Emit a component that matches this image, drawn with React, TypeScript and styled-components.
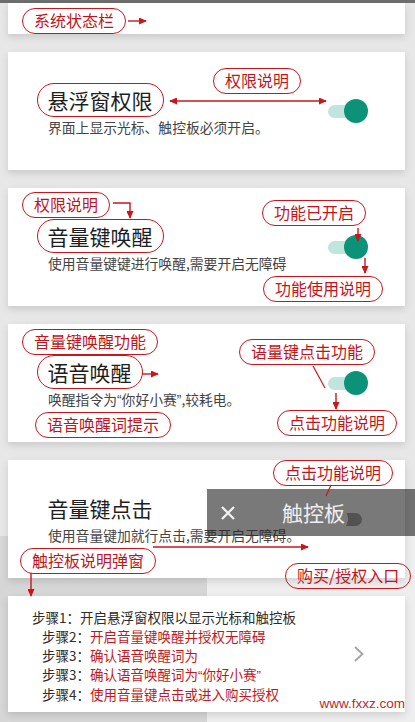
import React from 'react';
import styled, { createGlobalStyle } from 'styled-components';

const RED = '#c8161d';

const GlobalStyle = createGlobalStyle`
  html, body {
    margin: 0;
    padding: 0;
    background: #e7e7e7;
  }
  body {
    font-family: "Noto Sans CJK SC", "Noto Sans", sans-serif;
    color: #222;
  }
`;

const Page = styled.div`
  position: relative;
  width: 415px;
  height: 722px;
  overflow: hidden;
  background:
    linear-gradient(to right, #d6d6d6 0 207px, #eeeeee 207px 100%) 0 536px / 100% 186px no-repeat,
    #e7e7e7;
`;

const TopStrip = styled.div`
  height: 3px;
  background: #6e6e6e;
`;

const Cards = styled.div`
  display: flex;
  flex-direction: column;
  gap: 18px;
  padding: 0 10px 0 8px;
`;

const Card = styled.div<{ $h: number }>`
  height: ${({ $h }) => $h}px;
  background: #fff;
  box-shadow: 0 3px 7px rgba(0, 0, 0, 0.13);
  display: flex;
  align-items: center;
  box-sizing: border-box;
`;

const Info = styled.div`
  flex: 1;
  align-self: stretch;
  display: flex;
  flex-direction: column;
  align-items: flex-start;
  padding: 31px 0 0 40px;
`;

const Title = styled.div<{ $marked?: boolean }>`
  font-size: 21px;
  line-height: 28px;
  padding: 2px 10px;
  margin-left: -11.5px;
  border: 1.5px solid ${({ $marked }) => ($marked ? RED : 'transparent')};
  border-radius: 20px;
  color: #1e1e1e;
`;

const Desc = styled.div`
  font-size: 13.8px;
  line-height: 20px;
  color: #444;
  white-space: nowrap;
`;

const Quote = styled.span`
  font-family: "Liberation Sans", Arial, sans-serif;
`;

const Toggle = styled.div<{ $on?: boolean }>`
  position: relative;
  width: 40px;
  height: 24px;
  margin-right: 37px;
  flex-shrink: 0;

  &::before {
    content: '';
    position: absolute;
    left: 0;
    top: 5.5px;
    width: 34px;
    height: 13px;
    border-radius: 7px;
    background: ${({ $on }) => ($on ? '#bfe5dd' : '#9a9a9a')};
  }

  &::after {
    content: '';
    position: absolute;
    top: 0;
    ${({ $on }) => ($on ? 'right: 0;' : 'left: -4px;')}
    width: 24px;
    height: 24px;
    border-radius: 50%;
    background: ${({ $on }) => ($on ? '#0c9279' : '#ffffff')};
  }
`;

const Steps = styled.div`
  flex: 1;
  align-self: stretch;
  padding: 12px 0 0 24px;
  font-size: 13.5px;
  line-height: 19px;
  color: #2c2c2c;
`;

const Step = styled.div<{ $indent?: boolean }>`
  padding-left: ${({ $indent }) => ($indent ? 10 : 0)}px;
  white-space: nowrap;
`;

const Hint = styled.span`
  color: #c0181e;
`;

const Chevron = styled.svg`
  margin-right: 40px;
  flex-shrink: 0;
`;

const Watermark = styled.div`
  position: absolute;
  right: 10px;
  top: 696px;
  font-family: "Liberation Sans", Arial, sans-serif;
  font-size: 13.5px;
  line-height: 16px;
  color: #c0282d;
`;

const Toast = styled.div`
  position: absolute;
  left: 207px;
  top: 489px;
  width: 208px;
  height: 47px;
  background: rgba(38, 38, 38, 0.62);
  display: flex;
  align-items: center;
  padding-left: 13px;
  box-sizing: border-box;
  color: #efefef;
`;

const ToastTitle = styled.span`
  font-size: 21px;
  line-height: 28px;
  margin-left: 46px;
  margin-top: -2px;
`;

const Note = styled.div<{ $x: number; $y: number }>`
  position: absolute;
  left: ${({ $x }) => $x}px;
  top: ${({ $y }) => $y}px;
  height: 26px;
  box-sizing: border-box;
  padding: 0 11px;
  border: 1.5px solid ${RED};
  border-radius: 14px;
  font-size: 16px;
  line-height: 23px;
  color: #c0151c;
  white-space: nowrap;
`;

const Marks = styled.svg`
  position: absolute;
  left: 0;
  top: 0;
  pointer-events: none;
`;

const notes = [
  { x: 22, y: 8, text: '系统状态栏' },
  { x: 213, y: 68, text: '权限说明' },
  { x: 22, y: 192, text: '权限说明' },
  { x: 262, y: 200, text: '功能已开启' },
  { x: 263, y: 276, text: '功能使用说明' },
  { x: 22, y: 329, text: '音量键唤醒功能' },
  { x: 35, y: 412, text: '语音唤醒词提示' },
  { x: 239, y: 339, text: '语量键点击功能' },
  { x: 277, y: 410, text: '点击功能说明' },
  { x: 273, y: 460, text: '点击功能说明' },
  { x: 20, y: 548, text: '触控板说明弹窗' },
  { x: 285, y: 563, text: '购买/授权入口' },
];

const arrows = [
  'M128 21 H146',
  'M113 203 H130 V218',
  'M358 228 V241',
  'M365 258 V273',
  'M142 374 H158',
  'M336 393 V409',
  'M153 547 H308',
  'M31 573 V596',
];

const App: React.FC = () => {
  return (
    <Page>
      <GlobalStyle />
      <TopStrip />
      <Cards>
        <Card $h={31} />
        <Card $h={118}>
          <Info>
            <Title $marked>悬浮窗权限</Title>
            <Desc>界面上显示光标、触控板必须开启。</Desc>
          </Info>
          <Toggle $on />
        </Card>
        <Card $h={118}>
          <Info>
            <Title $marked>音量键唤醒</Title>
            <Desc>使用音量键键进行唤醒,需要开启无障碍</Desc>
          </Info>
          <Toggle $on />
        </Card>
        <Card $h={118}>
          <Info>
            <Title $marked>语音唤醒</Title>
            <Desc>
              唤醒指令为<Quote>“</Quote>你好小赛<Quote>”</Quote>,较耗电。
            </Desc>
          </Info>
          <Toggle $on />
        </Card>
        <Card $h={118}>
          <Info>
            <Title>音量键点击</Title>
            <Desc>使用音量键加就行点击,需要开启无障碍。</Desc>
          </Info>
          <Toggle />
        </Card>
        <Card $h={116}>
          <Steps>
            <Step>步骤1：开启悬浮窗权限以显示光标和触控板</Step>
            <Step $indent>
              步骤2：<Hint>开启音量键唤醒并授权无障碍</Hint>
            </Step>
            <Step $indent>
              步骤3：<Hint>确认语音唤醒词为</Hint>
            </Step>
            <Step $indent>
              步骤3：
              <Hint>
                确认语音唤醒词为<Quote>“</Quote>你好小赛<Quote>”</Quote>
              </Hint>
            </Step>
            <Step $indent>
              步骤4：<Hint>使用音量键点击或进入购买授权</Hint>
            </Step>
          </Steps>
          <Chevron width="12" height="18" viewBox="0 0 12 18">
            <path d="M2 2 L9.5 9 L2 16" fill="none" stroke="#a3a3a3" strokeWidth="1.8" />
          </Chevron>
        </Card>
      </Cards>

      <Watermark>www.fxxz.com</Watermark>

      <Toast>
        <svg width="16" height="16" viewBox="0 0 16 16">
          <path d="M2 2 L14 14 M14 2 L2 14" stroke="#f2f2f2" strokeWidth="2.2" />
        </svg>
        <ToastTitle>触控板</ToastTitle>
      </Toast>

      {notes.map((n, i) => (
        <Note key={i} $x={n.x} $y={n.y}>
          {n.text}
        </Note>
      ))}

      <Marks width="415" height="722" viewBox="0 0 415 722">
        <defs>
          <marker
            id="head"
            markerUnits="userSpaceOnUse"
            markerWidth="8"
            markerHeight="7"
            refX="7"
            refY="3.5"
            orient="auto-start-reverse"
          >
            <path d="M0 0 L8 3.5 L0 7 Z" fill={RED} />
          </marker>
        </defs>
        {arrows.map((d, i) => (
          <path key={i} d={d} fill="none" stroke={RED} strokeWidth="1.4" markerEnd="url(#head)" />
        ))}
        <path
          d="M170 101 H326"
          fill="none"
          stroke={RED}
          strokeWidth="1.4"
          markerStart="url(#head)"
          markerEnd="url(#head)"
        />
        <path d="M313 366 L325 388" fill="none" stroke={RED} strokeWidth="1.2" />
        <path d="M331 485 L326 496" fill="none" stroke={RED} strokeWidth="1.2" />
      </Marks>
    </Page>
  );
};

export default App;
